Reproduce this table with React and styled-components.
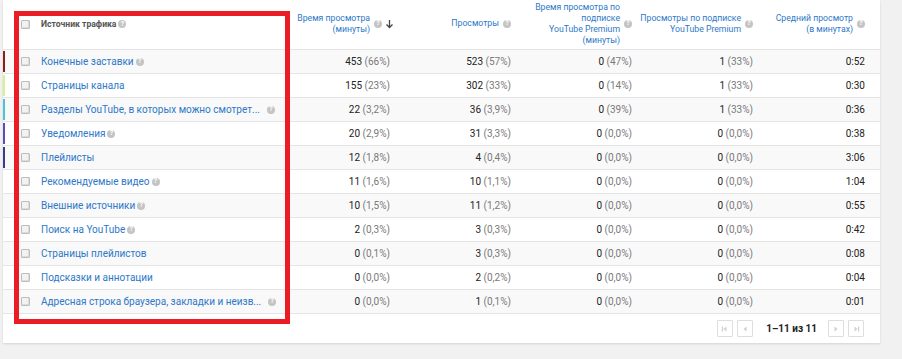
import styled, { createGlobalStyle } from 'styled-components';

const GlobalStyle = createGlobalStyle`
    html, body {
        margin: 0;
        padding: 0;
        background: #f1f1f1;
        font-family: Roboto, 'Liberation Sans', sans-serif;
    }
`;

const rows = [
    { name: 'Конечные заставки', help: true, bar: '#8e1c1c', watch: ['453', '66%'], views: ['523', '57%'], pw: ['0', '47%'], pv: ['1', '33%'], avg: '0:52' },
    { name: 'Страницы канала', bar: '#d6f28c', watch: ['155', '23%'], views: ['302', '33%'], pw: ['0', '14%'], pv: ['1', '33%'], avg: '0:30' },
    { name: 'Разделы YouTube, в которых можно смотрет...', cut: true, help: true, bar: '#4cc4d8', watch: ['22', '3,2%'], views: ['36', '3,9%'], pw: ['0', '39%'], pv: ['1', '33%'], avg: '0:36' },
    { name: 'Уведомления', help: true, bar: '#5b4fb3', watch: ['20', '2,9%'], views: ['31', '3,3%'], pw: ['0', '0,0%'], pv: ['0', '0,0%'], avg: '0:38' },
    { name: 'Плейлисты', bar: '#393a8c', watch: ['12', '1,8%'], views: ['4', '0,4%'], pw: ['0', '0,0%'], pv: ['0', '0,0%'], avg: '3:06' },
    { name: 'Рекомендуемые видео', help: true, watch: ['11', '1,6%'], views: ['10', '1,1%'], pw: ['0', '0,0%'], pv: ['0', '0,0%'], avg: '1:04' },
    { name: 'Внешние источники', help: true, watch: ['10', '1,5%'], views: ['11', '1,2%'], pw: ['0', '0,0%'], pv: ['0', '0,0%'], avg: '0:55' },
    { name: 'Поиск на YouTube', help: true, watch: ['2', '0,3%'], views: ['3', '0,3%'], pw: ['0', '0,0%'], pv: ['0', '0,0%'], avg: '0:42' },
    { name: 'Страницы плейлистов', watch: ['0', '0,1%'], views: ['3', '0,3%'], pw: ['0', '0,0%'], pv: ['0', '0,0%'], avg: '0:08' },
    { name: 'Подсказки и аннотации', watch: ['0', '0,0%'], views: ['2', '0,2%'], pw: ['0', '0,0%'], pv: ['0', '0,0%'], avg: '0:04' },
    { name: 'Адресная строка браузера, закладки и неизв...', cut: true, help: true, watch: ['0', '0,0%'], views: ['1', '0,1%'], pw: ['0', '0,0%'], pv: ['0', '0,0%'], avg: '0:01' },
];

function Help () {
    return <HelpIcon>?</HelpIcon>;
}

function Value ({ pair }) {
    return (
        <NumCell>
            {pair[0]} <Pct>({pair[1]})</Pct>
        </NumCell>
    );
}

function PagerIcon ({ dir, edge }) {
    const flip = dir === 'left' ? 'scale(-1,1) translate(-8,0)' : '';
    return (
        <svg width="8" height="8" viewBox="0 0 8 8">
            <g transform={flip}>
                <path d="M2.5 1.5 L5.5 4 L2.5 6.5 Z" fill="#cfcfcf" />
                {edge && <rect x="6" y="1.5" width="1.2" height="5" fill="#cfcfcf" />}
            </g>
        </svg>
    );
}

export default function App () {
    return (
        <>
            <GlobalStyle />
            <Page>
                <Card>
                    <HeadRow>
                        <SourceHead>
                            <Bar />
                            <Check />
                            <SourceTitle>Источник трафика</SourceTitle>
                            <Help />
                        </SourceHead>
                        <MetricHead>
                            <MetricText>Время просмотра<br />(минуты)</MetricText>
                            <Help />
                            <SortArrow width="9" height="10" viewBox="0 0 9 10">
                                <path d="M4.5 1 V8.5 M1.5 5.5 L4.5 8.5 L7.5 5.5" stroke="#444" strokeWidth="1.3" fill="none" />
                            </SortArrow>
                        </MetricHead>
                        <MetricHead>
                            <MetricText>Просмотры</MetricText>
                            <Help />
                        </MetricHead>
                        <MetricHead>
                            <MetricText>Время просмотра по<br />подписке<br />YouTube Premium<br />(минуты)</MetricText>
                            <Help />
                        </MetricHead>
                        <MetricHead>
                            <MetricText>Просмотры по подписке<br />YouTube Premium</MetricText>
                            <Help />
                        </MetricHead>
                        <MetricHead>
                            <MetricText>Средний просмотр<br />(в минутах)</MetricText>
                            <Help />
                        </MetricHead>
                    </HeadRow>

                    {rows.map((r, i) => (
                        <Row key={r.name} $odd={i % 2 === 0}>
                            <SourceCell>
                                <Bar $color={r.bar} />
                                <Check />
                                <SourceName $cut={r.cut}>{r.name}</SourceName>
                                {r.help && <Help />}
                            </SourceCell>
                            <Value pair={r.watch} />
                            <Value pair={r.views} />
                            <Value pair={r.pw} />
                            <Value pair={r.pv} />
                            <NumCell>{r.avg}</NumCell>
                        </Row>
                    ))}

                    <Pager>
                        <PagerButton><PagerIcon dir="left" edge /></PagerButton>
                        <PagerButton><PagerIcon dir="left" /></PagerButton>
                        <PagerLabel>1–11 из 11</PagerLabel>
                        <PagerButton><PagerIcon dir="right" /></PagerButton>
                        <PagerButton><PagerIcon dir="right" edge /></PagerButton>
                    </Pager>
                </Card>
                <Highlight />
            </Page>
        </>
    );
}

const Page = styled.div`
    position: relative;
    width: 902px;
    height: 359px;
    padding-left: 3px;
    box-sizing: border-box;
`;

const Card = styled.div`
    width: 877px;
    background: #ffffff;
    box-shadow: 0 1px 2px rgba(0, 0, 0, 0.12);
`;

const grid = `
    display: grid;
    grid-template-columns: 266px repeat(4, 121px) 112px;
    padding-right: 15px;
    border-bottom: 1px solid #e5e5e5;
`;

const HeadRow = styled.div`
    ${grid}
    height: 49px;
    align-items: center;
`;

const Row = styled.div`
    ${grid}
    height: 23px;
    align-items: center;
    background: ${p => (p.$odd ? '#f9f9f9' : '#ffffff')};
`;

const SourceHead = styled.div`
    display: flex;
    align-items: center;
    height: 100%;
    padding-bottom: 1px;
    box-sizing: border-box;
`;

const SourceCell = styled.div`
    display: flex;
    align-items: center;
    height: 100%;
    min-width: 0;
`;

const Bar = styled.span`
    width: 2px;
    align-self: stretch;
    margin: 1px 0;
    background: ${p => p.$color || 'transparent'};
    flex-shrink: 0;
`;

const Check = styled.span`
    width: 7px;
    height: 7px;
    margin-left: 16px;
    margin-right: 11px;
    border: 1px solid #bdbdbd;
    border-radius: 1px;
    background: #f2f2f2;
    box-shadow: inset -1px -1px 0 #dcdcdc;
    flex-shrink: 0;
`;

const SourceTitle = styled.span`
    font-size: 8.6px;
    font-weight: 700;
    color: #555555;
`;

const SourceName = styled.span`
    font-size: 10px;
    color: #2d78c8;
    white-space: nowrap;
    margin-right: ${p => (p.$cut ? '5px' : '0')};
`;

const HelpIcon = styled.span`
    display: inline-flex;
    align-items: center;
    justify-content: center;
    width: 8px;
    height: 8px;
    margin-left: 2px;
    border-radius: 50%;
    background: #c4c4c4;
    color: #ffffff;
    font-size: 7px;
    font-weight: 700;
    line-height: 1;
    flex-shrink: 0;
`;

const MetricHead = styled.div`
    display: flex;
    align-items: center;
    justify-content: flex-end;
    gap: 2px;
    padding-bottom: 2px;
`;

const SortArrow = styled.svg`
    margin-right: -4px;
    margin-left: 1px;
`;

const MetricText = styled.span`
    font-size: 8.7px;
    line-height: 11px;
    color: #2d78c8;
    text-align: right;
    white-space: nowrap;
`;

const NumCell = styled.div`
    text-align: right;
    font-size: 10px;
    color: #222222;
    white-space: nowrap;
`;

const Pct = styled.span`
    color: #7a7a7a;
`;

const Pager = styled.div`
    display: flex;
    align-items: center;
    justify-content: flex-end;
    height: 29px;
    padding-right: 16px;
    gap: 4px;
`;

const PagerButton = styled.span`
    display: inline-flex;
    align-items: center;
    justify-content: center;
    width: 14px;
    height: 15px;
    border: 1px solid #dedede;
    border-radius: 1px;
`;

const PagerLabel = styled.span`
    margin: 0 7px 0 9px;
    font-size: 10px;
    font-weight: 700;
    color: #222222;
`;

const Highlight = styled.div`
    position: absolute;
    left: 14px;
    top: 11px;
    width: 276px;
    height: 313px;
    border: 5px solid #ea1c24;
    box-sizing: border-box;
    pointer-events: none;
`;
